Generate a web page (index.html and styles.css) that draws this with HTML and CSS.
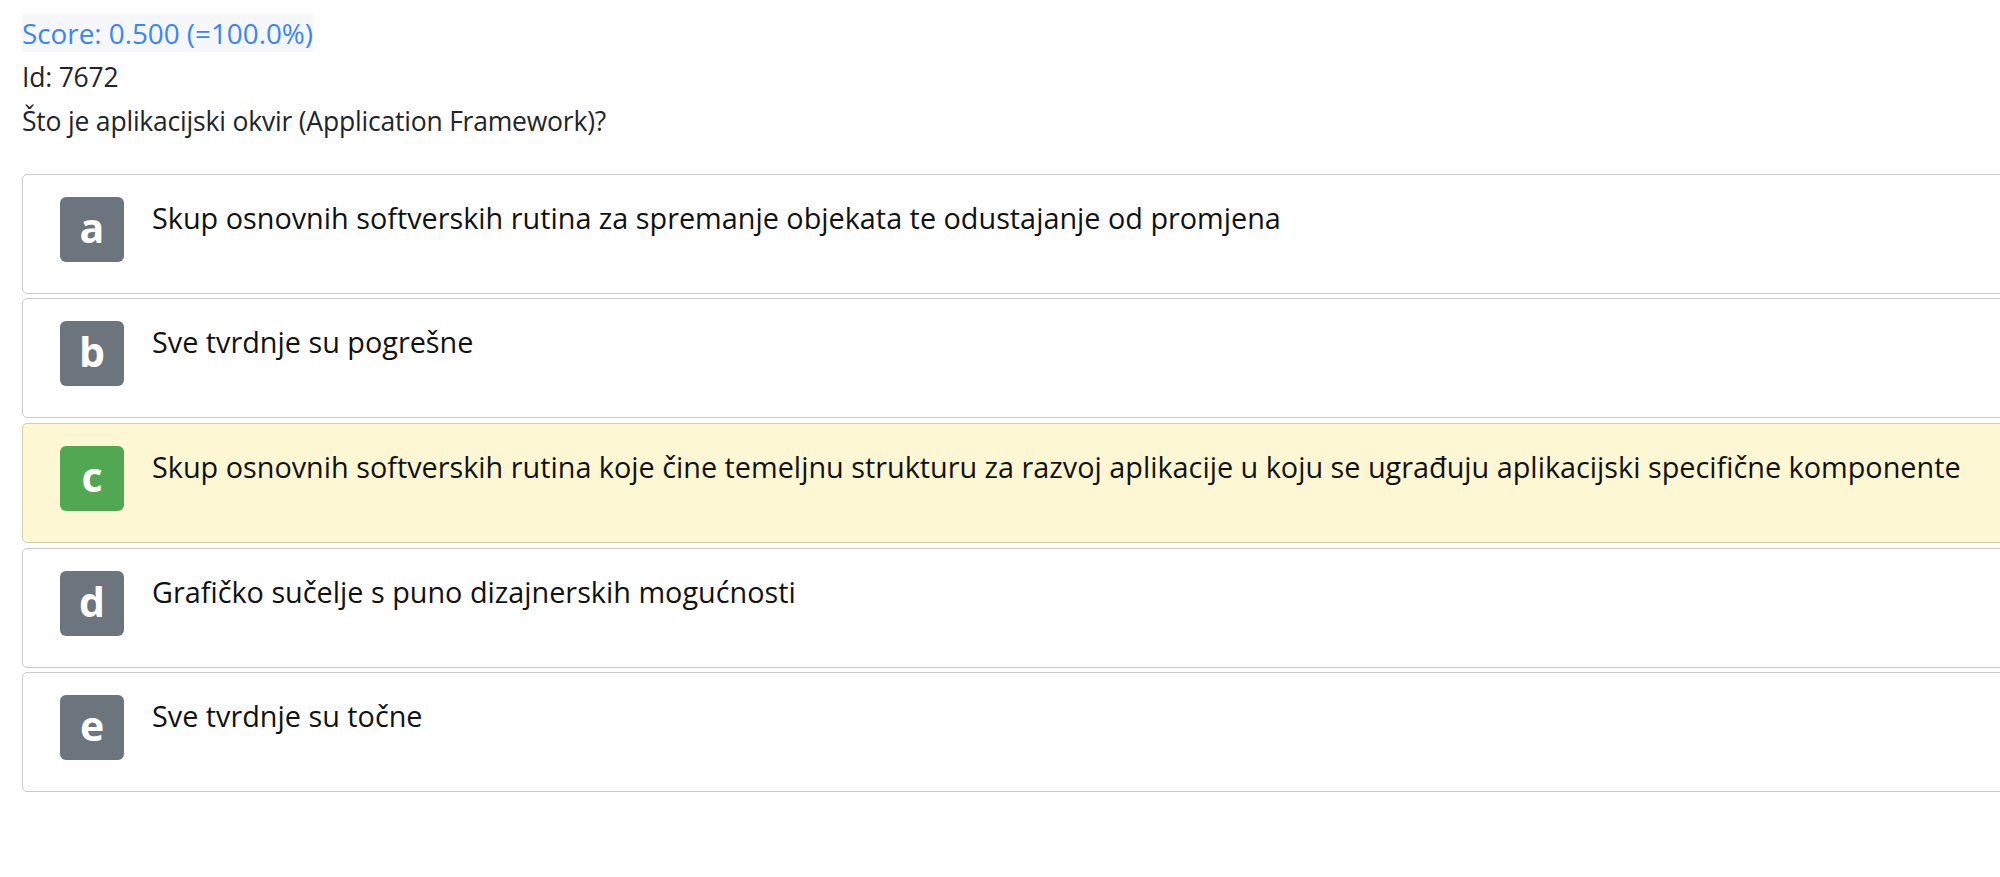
FILE: index.html
```html
<!DOCTYPE html>
<html lang="hr">
<head>
<meta charset="utf-8">
<title>Pitanje 7672</title>
<link rel="stylesheet" href="styles.css">
</head>
<body>
<main class="page">
  <div class="meta">
    <div class="score"><span class="score-text">Score: 0.500 (=100.0%)</span></div>
    <div class="qid">Id: 7672</div>
    <div class="question">Što je aplikacijski okvir (Application Framework)?</div>
  </div>
  <ul class="answers">
    <li class="answer">
      <span class="badge">a</span>
      <span class="answer-text">Skup osnovnih softverskih rutina za spremanje objekata te odustajanje od promjena</span>
    </li>
    <li class="answer">
      <span class="badge">b</span>
      <span class="answer-text">Sve tvrdnje su pogrešne</span>
    </li>
    <li class="answer answer-correct">
      <span class="badge badge-correct">c</span>
      <span class="answer-text">Skup osnovnih softverskih rutina koje čine temeljnu strukturu za razvoj aplikacije u koju se ugrađuju aplikacijski specifične komponente</span>
    </li>
    <li class="answer">
      <span class="badge">d</span>
      <span class="answer-text">Grafičko sučelje s puno dizajnerskih mogućnosti</span>
    </li>
    <li class="answer">
      <span class="badge">e</span>
      <span class="answer-text">Sve tvrdnje su točne</span>
    </li>
  </ul>
</main>
</body>
</html>
```

FILE: styles.css
```css
html, body {
  margin: 0;
  padding: 0;
  background: #ffffff;
  overflow: hidden;
}

.page {
  padding: 11px 0 0 22px;
  font-family: "Open Sans", "Noto Sans", sans-serif;
  color: #212529;
}

.meta {
  font-size: 26.5px;
  line-height: 44px;
  letter-spacing: -0.2px;
}

.score {
  font-size: 27.8px;
  letter-spacing: 0;
}

.score-text {
  background: #f5f7fa;
  color: #3b86f6;
}

.answers {
  list-style: none;
  margin: 30.5px 0 0 0;
  padding: 0;
  width: 2100px;
}

.answer {
  box-sizing: border-box;
  height: 120px;
  margin-bottom: 4.7px;
  border: 1.5px solid #c9c9c9;
  border-radius: 5px;
  background: #ffffff;
  display: flex;
  align-items: flex-start;
  padding: 22px 0 0 37px;
  gap: 28px;
}

.answer-correct {
  background: #fdf8d3;
  border-color: #d3cfae;
}

.badge {
  flex: none;
  width: 64px;
  height: 65px;
  border-radius: 6px;
  background: #6c757d;
  color: #ffffff;
  font-weight: 700;
  font-size: 41px;
  display: flex;
  align-items: center;
  justify-content: center;
  line-height: 1;
  padding-bottom: 4px;
  box-sizing: border-box;
}

.badge-correct {
  background: #52a852;
}

.answer-text {
  font-size: 28.8px;
  line-height: 42px;
  color: #111111;
  white-space: nowrap;
}
```
